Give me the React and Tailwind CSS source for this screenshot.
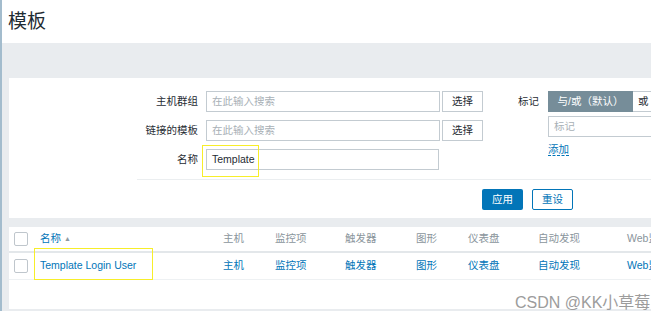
import React from 'react';

const columns = [
  { label: '主机', w: 'w-[52px]' },
  { label: '监控项', w: 'w-[70px]' },
  { label: '触发器', w: 'w-[71px]' },
  { label: '图形', w: 'w-[52px]' },
  { label: '仪表盘', w: 'w-[70px]' },
  { label: '自动发现', w: 'w-[89px]' },
  { label: 'Web监测', w: 'w-[80px]' },
];

const Checkbox = () => (
  <span className="block w-[14px] h-[14px] border border-[#bfc6cc] rounded-[2px] bg-white" />
);

const FilterRow = ({ label, children }) => (
  <div className="flex items-center h-[21px]">
    <span className="w-[61px] shrink-0 text-right text-[#1f2c33] whitespace-nowrap">{label}</span>
    <div className="ml-[8px] flex items-center gap-[2px]">{children}</div>
  </div>
);

const SearchInput = ({ placeholder, value, w = 'w-[234px]' }) => (
  <div className={`${w} shrink-0 h-[21px] border border-[#c3cbd1] bg-white flex items-center px-[5px]`}>
    {value ? (
      <span className="text-[#1f2c33]">{value}</span>
    ) : (
      <span className="text-[#a8b0b6]">{placeholder}</span>
    )}
  </div>
);

const SelectButton = () => (
  <button className="w-[41px] shrink-0 h-[21px] border border-[#c3cbd1] bg-white text-[#1f2c33] flex items-center justify-center">
    选择
  </button>
);

export default function App() {
  return (
    <div className="relative w-[666px] h-[323px] bg-white overflow-hidden text-[10.5px] font-['Liberation_Sans','Noto_Sans_CJK_SC',sans-serif]">
      <div className="w-[651px] h-[311px] border-l-2 border-[#a3bccd] flex flex-col">
        <header className="h-[43px] pl-[6px] flex items-center">
          <h1 className="text-[19px] text-[#1f2c33] leading-none">模板</h1>
        </header>

        <div className="flex-1 bg-[#e9ecef] pt-[35px] pl-[7px] pb-[2px] flex flex-col">
          {/* filter */}
          <section className="h-[140px] bg-white overflow-hidden flex flex-col">
            <div className="flex pt-[13px] pl-[128px] h-[101px]">
              <div className="flex flex-col gap-[8px] shrink-0">
                <FilterRow label="主机群组">
                  <SearchInput placeholder="在此输入搜索" />
                  <SelectButton />
                </FilterRow>
                <FilterRow label="链接的模板">
                  <SearchInput placeholder="在此输入搜索" />
                  <SelectButton />
                </FilterRow>
                <FilterRow label="名称">
                  <SearchInput value="Template" w="w-[233px]" />
                </FilterRow>
              </div>

              <div className="ml-[35px] flex items-start shrink-0">
                <span className="h-[21px] flex items-center text-[#1f2c33] whitespace-nowrap">标记</span>
                <div className="ml-[9px] flex flex-col">
                  <div className="flex h-[21px] whitespace-nowrap">
                    <span className="w-[85px] shrink-0 bg-[#768d99] text-white flex items-center justify-center">
                      与/或（默认）
                    </span>
                    <span className="w-[40px] shrink-0 border border-[#c3cbd1] border-l-0 bg-white text-[#1f2c33] flex items-center pl-[5px]">
                      或
                    </span>
                  </div>
                  <div className="mt-[4px] w-[130px] h-[21px] border border-[#c3cbd1] flex items-center px-[5px] text-[#a8b0b6]">
                    标记
                  </div>
                  <span className="mt-[6px] self-start text-[#0275b8] border-b border-dashed border-[#0275b8] leading-[12px]">
                    添加
                  </span>
                </div>
              </div>
            </div>

            <div className="ml-[128px] border-t border-[#ebeef0]" />
            <div className="flex gap-[9px] pt-[9px] pl-[473px]">
              <button className="w-[41px] shrink-0 h-[21px] bg-[#0275b8] text-white rounded-[2px] flex items-center justify-center">
                应用
              </button>
              <button className="w-[41px] shrink-0 h-[21px] border border-[#0275b8] bg-white text-[#0275b8] rounded-[2px] flex items-center justify-center">
                重设
              </button>
            </div>
          </section>

          {/* table */}
          <section className="mt-[9px] flex-1 bg-white overflow-hidden">
            <div className="flex items-center h-[26px] border-b-2 border-[#e3e7ea] whitespace-nowrap">
              <div className="w-[31px] shrink-0 pl-[5px]">
                <Checkbox />
              </div>
              <div className="w-[183px] shrink-0 text-[#0275b8] flex items-center gap-[3px]">
                名称
                <span className="text-[#8f9aa1] text-[7px]">▲</span>
              </div>
              {columns.map((c) => (
                <div key={c.label} className={`${c.w} shrink-0 text-[#8a959c]`}>
                  {c.label}
                </div>
              ))}
            </div>
            <div className="flex items-center h-[27px] border-b border-[#eef1f3] whitespace-nowrap">
              <div className="w-[31px] shrink-0 pl-[5px]">
                <Checkbox />
              </div>
              <div className="w-[183px] shrink-0 text-[#0275b8]">Template Login User</div>
              {columns.map((c) => (
                <div key={c.label} className={`${c.w} shrink-0 text-[#0275b8]`}>
                  {c.label}
                </div>
              ))}
            </div>
          </section>
        </div>
      </div>

      {/* annotation boxes */}
      <div className="absolute left-[202px] top-[145px] w-[57px] h-[32px] border border-[#f7ee2a]" />
      <div className="absolute left-[34px] top-[248px] w-[119px] h-[32px] border border-[#f7ee2a]" />

      <span className="absolute left-[515px] top-[294px] text-[16px] leading-[18px] text-[#9c9c9c] whitespace-nowrap">
        CSDN @KK小草莓
      </span>
    </div>
  );
}
